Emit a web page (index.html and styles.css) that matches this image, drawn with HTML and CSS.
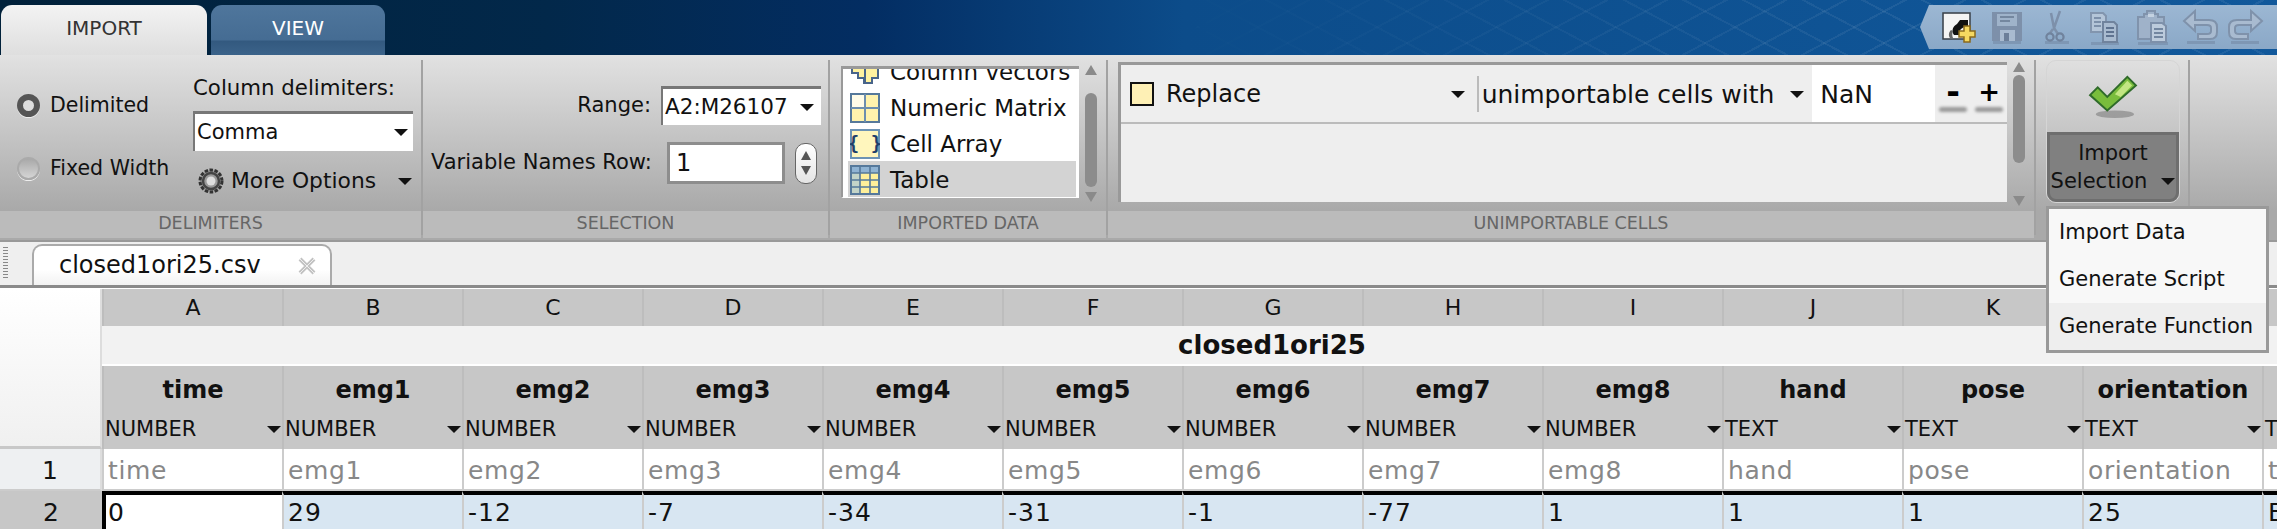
FILE: index.html
```html
<!doctype html>
<html lang="en">

<head>
  <meta charset="UTF-8">
  <title>Import - closed1ori25.csv</title>
  <link rel="stylesheet" href="styles.css">
</head>

<body>
  <header class="topbar">
    <div class="tab tab-active">IMPORT</div>
    <div class="tab tab-view">VIEW</div>
    <div class="quick">
      <svg class="qa" viewBox="0 0 48 44">
        <rect x="8" y="8" width="27" height="26" fill="#dfe3e6" stroke="#3a4048" stroke-width="1.5" />
        <path d="M9 9h25v24H9z" fill="#f4f4f4" />
        <path d="M19 30c-3-4-1-9 3-11l3-4h8v15h-4v-8l-3 2c-2 2-2 4-1 6z" fill="#111" />
        <path d="M15 33c-2-3-1-6 1-8l2 1c-1 2-1 5 0 7z" fill="#666" />
        <path d="M24 26h5v-5h6v5h5v6h-5v5h-6v-5h-5z" fill="#f5d860" stroke="#8a6a1c" stroke-width="1.5" />
      </svg>
      <svg class="qa" viewBox="0 0 48 44">
        <rect x="10" y="36" width="28" height="3" fill="#6f84a0" opacity=".5" />
        <path d="M9 7h30v29H9z" fill="#7d90aa" />
        <path d="M14 9h20v12H14z" fill="#9fb3ca" />
        <path d="M17 12h14M17 16h10" stroke="#74879f" stroke-width="2" />
        <path d="M17 25h15v11H17z" fill="#a9bbd0" />
        <path d="M21 28h5v8h-5z" fill="#6c7f99" />
      </svg>
      <svg class="qa" viewBox="0 0 48 44">
        <rect x="14" y="36" width="24" height="3" fill="#6f84a0" opacity=".5" />
        <path d="M29 6l-6 17M20 8l3 15 4 6M22 24l-3 4" stroke="#7d90aa" stroke-width="2.5" fill="none" />
        <circle cx="19" cy="32" r="3.6" fill="none" stroke="#70839d" stroke-width="2.2" />
        <circle cx="29" cy="32" r="3.6" fill="none" stroke="#70839d" stroke-width="2.2" />
      </svg>
      <svg class="qa" viewBox="0 0 48 44">
        <rect x="12" y="37" width="28" height="3" fill="#6f84a0" opacity=".5" />
        <path d="M12 8h12l3 3v16H12z" fill="#b4c5d8" stroke="#8295ae" stroke-width="2" />
        <path d="M15 13h7M15 17h7M15 21h7" stroke="#7d90aa" stroke-width="2" />
        <path d="M24 17h11l3 3v17H24z" fill="#a9bbd0" stroke="#70839d" stroke-width="2" />
        <path d="M27 23h8M27 27h8M27 31h8" stroke="#5f7390" stroke-width="2" />
      </svg>
      <svg class="qa" viewBox="0 0 48 44">
        <rect x="11" y="37" width="30" height="3" fill="#6f84a0" opacity=".5" />
        <path d="M11 12h6v-3h3V6h8v3h3v3h6v22H11z" fill="#9fb2c9" stroke="#8093ac" stroke-width="2" />
        <path d="M21 9h6v3h-6z" fill="#c4d2e1" />
        <path d="M24 18h11l4 3v16H24z" fill="#bccbdc" stroke="#7d90aa" stroke-width="2" />
        <path d="M27 24h9M27 28h9M27 32h9" stroke="#7286a0" stroke-width="2" />
      </svg>
      <svg class="qa" viewBox="0 0 48 44">
        <rect x="12" y="36" width="28" height="3" fill="#6f84a0" opacity=".5" />
        <path d="M20 6L9 16l11 10v-6h12c3 0 4 1 4 3v3c0 2-1 3-4 3H23v5h12c5 0 7-3 7-7v-5c0-5-3-7-8-7H20z" fill="#a9bbd0" stroke="#7f92ab" stroke-width="2" />
      </svg>
      <svg class="qa" viewBox="0 0 48 44">
        <rect x="8" y="36" width="28" height="3" fill="#6f84a0" opacity=".5" />
        <path d="M28 6l11 10-11 10v-6H16c-3 0-4 1-4 3v3c0 2 1 3 4 3h9v5H13c-5 0-7-3-7-7v-5c0-5 3-7 8-7h14z" fill="#a9bbd0" stroke="#7f92ab" stroke-width="2" />
      </svg>
    </div>
  </header>

  <section class="ribbon">
    <div class="group group-delim">
      <div class="group-body">
        <div class="radios">
          <label class="radio"><i class="dot dot-on"></i>Delimited</label>
          <label class="radio"><i class="dot"></i>Fixed Width</label>
        </div>
        <div class="delims">
          <div class="delims-title">Column delimiters:</div>
          <div class="combo combo-comma">Comma<i class="arrow"></i></div>
          <div class="more">
            <svg class="gear" viewBox="0 0 28 28">
              <circle cx="14" cy="14" r="11" fill="#9a9a9a" stroke="#333" stroke-width="3" stroke-dasharray="3.5 1.5" />
              <circle cx="14" cy="14" r="8" fill="none" stroke="#444" stroke-width="2.5" />
              <circle cx="14" cy="14" r="4.5" fill="#dedede" />
            </svg>
            More Options<i class="arrow"></i>
          </div>
        </div>
      </div>
      <div class="group-label">DELIMITERS</div>
    </div>

    <div class="group group-sel">
      <div class="group-body sel-grid">
        <span class="sel-label">Range:</span>
        <div class="combo combo-range">A2:M26107<i class="arrow"></i></div>
        <span class="sel-label">Variable Names Row:</span>
        <div class="spin-row">
          <div class="spin-input">1</div>
          <div class="spinner"><i class="tri tri-up"></i><i class="tri tri-down"></i></div>
        </div>
      </div>
      <div class="group-label">SELECTION</div>
    </div>

    <div class="group group-data">
      <div class="group-body data-body">
        <ul class="types">
          <li class="type type-clipped">
            <svg class="type-icon" viewBox="0 0 30 30">
              <path d="M2 16h6v5h6v5h8v-5h6V2H2z" fill="#fff2a0" stroke="#49658a" stroke-width="2" />
              <path d="M15 2v24" stroke="#49658a" stroke-width="2" />
            </svg>
            Column vectors
          </li>
          <li class="type">
            <svg class="type-icon" viewBox="0 0 30 30">
              <rect x="1" y="1" width="28" height="28" fill="#fff3ad" stroke="#56799b" stroke-width="2" />
              <path d="M2 2h13v13H2z" fill="#fffce8" />
              <path d="M15 1v28M1 15h28" stroke="#6d8fae" stroke-width="2" />
            </svg>
            Numeric Matrix
          </li>
          <li class="type">
            <svg class="type-icon" viewBox="0 0 30 30">
              <rect x="1" y="1" width="28" height="28" fill="#fff6bd" stroke="#6d93b4" stroke-width="2" />
              <text class="braces" x="15" y="21" text-anchor="middle">{ }</text>
            </svg>
            Cell Array
          </li>
          <li class="type type-on">
            <svg class="type-icon" viewBox="0 0 30 30">
              <rect x="1" y="1" width="28" height="28" fill="#fff09a" stroke="#56799b" stroke-width="2" />
              <path d="M2 2h26v6H2z" fill="#8fb3d3" />
              <path d="M2 8h8v20H2z" fill="#c3d4c8" />
              <path d="M10 1v28M20 1v28M1 8h28M1 15h28M1 22h28" stroke="#56799b" stroke-width="1.6" />
            </svg>
            Table
          </li>
        </ul>
        <div class="vscroll vscroll-data"><i class="tri tri-up"></i><i class="thumb"></i><i class="tri tri-down"></i></div>
      </div>
      <div class="group-label">IMPORTED DATA</div>
    </div>

    <div class="group group-unimp">
      <div class="group-body unimp-body">
        <div class="rules">
          <div class="rule">
            <i class="swatch"></i>
            <span class="rule-action">Replace<i class="arrow"></i></span>
            <span class="rule-sep"></span>
            <span class="rule-what">unimportable cells with<i class="arrow"></i></span>
            <span class="rule-value">NaN</span>
            <span class="rule-btn rule-minus">-</span>
            <span class="rule-btn">+</span>
          </div>
        </div>
        <div class="vscroll vscroll-rules"><i class="tri tri-up"></i><i class="thumb"></i><i class="tri tri-down"></i></div>
      </div>
      <div class="group-label">UNIMPORTABLE CELLS</div>
    </div>

    <div class="group group-import">
      <div class="group-body import-body">
        <div class="import-btn">
          <div class="import-top">
            <svg class="check" viewBox="0 0 52 46">
              <ellipse cx="28" cy="41" rx="20" ry="4" fill="#777" opacity=".55" />
              <path d="M2 21l8-8 10 10L41 2l9 9-30 26z" fill="#79bd3c" stroke="#2f6b2a" stroke-width="2" />
              <path d="M28 20L41 6l5 5-12 12z" fill="#c3e683" />
            </svg>
          </div>
          <div class="import-split">Import<br>Selection<i class="arrow"></i></div>
        </div>
      </div>
    </div>
    <div class="ribbon-rest"></div>
  </section>

  <nav class="docbar">
    <i class="grip"></i>
    <div class="doctab">
      closed1ori25.csv
      <svg class="close" viewBox="0 0 18 18">
        <path d="M2 2l14 14M16 2L2 16" stroke="#c2c2c2" stroke-width="4" />
        <path d="M2 2l14 14M16 2L2 16" stroke="#eee" stroke-width="1" />
      </svg>
    </div>
  </nav>

  <main class="sheet">
    <div class="corner"></div>
    <div class="col">A</div><div class="col">B</div><div class="col">C</div><div class="col">D</div><div class="col">E</div><div class="col">F</div><div class="col">G</div><div class="col">H</div><div class="col">I</div><div class="col">J</div><div class="col">K</div><div class="col">L</div><div class="col">M</div>

    <div class="title">closed1ori25</div>

    <div class="name"><b>time</b><span>NUMBER<i class="arrow"></i></span></div>
    <div class="name"><b>emg1</b><span>NUMBER<i class="arrow"></i></span></div>
    <div class="name"><b>emg2</b><span>NUMBER<i class="arrow"></i></span></div>
    <div class="name"><b>emg3</b><span>NUMBER<i class="arrow"></i></span></div>
    <div class="name"><b>emg4</b><span>NUMBER<i class="arrow"></i></span></div>
    <div class="name"><b>emg5</b><span>NUMBER<i class="arrow"></i></span></div>
    <div class="name"><b>emg6</b><span>NUMBER<i class="arrow"></i></span></div>
    <div class="name"><b>emg7</b><span>NUMBER<i class="arrow"></i></span></div>
    <div class="name"><b>emg8</b><span>NUMBER<i class="arrow"></i></span></div>
    <div class="name"><b>hand</b><span>TEXT<i class="arrow"></i></span></div>
    <div class="name"><b>pose</b><span>TEXT<i class="arrow"></i></span></div>
    <div class="name"><b>orientation</b><span>TEXT<i class="arrow"></i></span></div>
    <div class="name"><b>&nbsp;</b><span>TEXT<i class="arrow"></i></span></div>

    <div class="rowhead">1</div>
    <div class="cell cell-raw">time</div><div class="cell cell-raw">emg1</div><div class="cell cell-raw">emg2</div><div class="cell cell-raw">emg3</div><div class="cell cell-raw">emg4</div><div class="cell cell-raw">emg5</div><div class="cell cell-raw">emg6</div><div class="cell cell-raw">emg7</div><div class="cell cell-raw">emg8</div><div class="cell cell-raw">hand</div><div class="cell cell-raw">pose</div><div class="cell cell-raw">orientation</div><div class="cell cell-raw">t</div>

    <div class="rowhead rowhead-on">2</div>
    <div class="cell cell-sel cell-first">0</div><div class="cell cell-sel">29</div><div class="cell cell-sel">-12</div><div class="cell cell-sel">-7</div><div class="cell cell-sel">-34</div><div class="cell cell-sel">-31</div><div class="cell cell-sel">-1</div><div class="cell cell-sel">-77</div><div class="cell cell-sel">1</div><div class="cell cell-sel">1</div><div class="cell cell-sel">1</div><div class="cell cell-sel">25</div><div class="cell cell-sel">E</div>
  </main>

  <div class="menu">
    <div class="menu-item">Import Data</div>
    <div class="menu-item">Generate Script</div>
    <div class="menu-item menu-item-on">Generate Function</div>
  </div>
</body>

</html>
```

FILE: styles.css
```css
html,
body {
  margin: 0;
  height: 529px;
  overflow: hidden;
}

body {
  position: relative;
  width: 2277px;
  font: 400 21px/1.2 "DejaVu Sans", sans-serif;
  color: #111;
  background: #fff;
}

i {
  font-style: normal;
}

.arrow {
  display: inline-block;
  width: 0;
  height: 0;
  border-left: 7px solid transparent;
  border-right: 7px solid transparent;
  border-top: 7px solid #111;
}

.tri {
  display: block;
  width: 0;
  height: 0;
  border-left: 6px solid transparent;
  border-right: 6px solid transparent;
}

.tri-up {
  border-bottom: 10px solid #8a8a8a;
}

.tri-down {
  border-top: 10px solid #8a8a8a;
}

/* top bar */
.topbar {
  position: relative;
  display: flex;
  align-items: flex-end;
  height: 55px;
  padding-left: 1px;
  box-sizing: border-box;
  background: linear-gradient(90deg, #01213a 0, #02284a 24%, #032d62 38%, #0c4c8a 52%, #11589b 100%);
  overflow: hidden;
}

.topbar::before {
  content: "";
  position: absolute;
  inset: 0;
  background:
    repeating-linear-gradient(28deg, transparent 0 26px, rgba(255, 255, 255, .07) 26px 28px),
    repeating-linear-gradient(-28deg, transparent 0 26px, rgba(255, 255, 255, .07) 26px 28px);
  -webkit-mask-image: linear-gradient(90deg, transparent 50%, #000 85%);
  mask-image: linear-gradient(90deg, transparent 50%, #000 85%);
}

.tab {
  position: relative;
  height: 50px;
  box-sizing: border-box;
  padding-top: 11px;
  border-radius: 11px 11px 0 0;
  text-align: center;
  font-size: 20px;
}

.tab-active {
  width: 206px;
  color: #333;
  background: linear-gradient(#f3f3f3, #dedede);
}

.tab-view {
  width: 174px;
  margin-left: 4px;
  color: #fff;
  background: linear-gradient(#4f769c 0, #456c93 70%, #33597f 72%, #3b638a 100%);
}

.quick {
  position: relative;
  display: flex;
  align-self: flex-start;
  box-sizing: border-box;
  width: 357px;
  height: 44px;
  margin: 5px 0 0 auto;
  padding-left: 15px;
  background: linear-gradient(#9cb7d3, #8aa8c7);
  clip-path: polygon(0 50%, 9px 0, 100% 0, 100% 100%, 9px 100%);
}

.qa {
  flex: none;
  width: 48px;
  height: 44px;
}

/* ribbon */
.ribbon {
  display: flex;
  height: 185px;
  border-bottom: 2px solid #999;
  background: linear-gradient(#e2e2e2 0, #dedede 5%, #a9a9a9 84%, #a9a9a9 100%);
}

.group {
  display: flex;
  flex-direction: column;
  box-sizing: border-box;
  background: linear-gradient(#a2a2a2, #a2a2a2) right 5px / 2px 175px no-repeat;
}

.group-body {
  height: 156px;
  box-sizing: border-box;
}

.group-label {
  height: 27px;
  margin-right: 2px;
  text-align: center;
  font-size: 17.5px;
  line-height: 25px;
  color: #666;
  background: #bbb;
}

.group-delim {
  width: 423px;
}

.group-delim .group-body {
  display: flex;
}

.radios {
  display: flex;
  flex-direction: column;
  gap: 31px;
  width: 193px;
  box-sizing: border-box;
  padding: 34px 0 0 17px;
}

.radio {
  display: flex;
  align-items: center;
  gap: 10px;
  height: 32px;
  font-size: 20.5px;
}

.dot {
  width: 23px;
  height: 23px;
  box-sizing: border-box;
  border-radius: 50%;
  border: 2px solid #aaa;
  background: linear-gradient(#a9a9a9, #d5d5d5);
  box-shadow: 0 1px 0 #eee;
}

.dot-on {
  border: 6px solid #555;
  background: #ddd;
}

.delims {
  width: 220px;
  padding-top: 20px;
}

.delims-title {
  height: 26px;
  line-height: 26px;
  font-size: 21.3px;
  white-space: nowrap;
}

.combo {
  display: flex;
  align-items: center;
  justify-content: space-between;
  box-sizing: border-box;
  background: #fff;
  border-top: 3px solid #777;
  border-left: 2px solid #777;
  font-size: 21px;
}

.combo-comma {
  height: 40px;
  margin-top: 10px;
  padding: 0 5px 0 2px;
}

.more {
  display: flex;
  align-items: center;
  height: 34px;
  margin-top: 13px;
  padding-left: 4px;
  font-size: 21.8px;
  white-space: nowrap;
}

.gear {
  width: 28px;
  height: 28px;
  margin-right: 6px;
}

.more .arrow {
  margin-left: 22px;
}

.group-sel {
  width: 407px;
}

.sel-grid {
  display: grid;
  grid-template-columns: 220px 160px;
  grid-template-rows: 39px 42px;
  column-gap: 10px;
  row-gap: 17px;
  align-items: center;
  padding: 31px 0 0 8px;
}

.sel-label {
  text-align: right;
  white-space: nowrap;
  font-size: 21px;
}

.combo-range {
  height: 39px;
  padding: 0 7px 0 2px;
  font-size: 21.5px;
}

.spin-row {
  display: flex;
  align-items: center;
  margin-left: 6px;
}

.spin-input {
  width: 118px;
  height: 42px;
  box-sizing: border-box;
  padding-left: 6px;
  border: 3px solid #8d8d8d;
  font-size: 24px;
  line-height: 36px;
  background: #fff;
}

.spinner {
  display: flex;
  flex-direction: column;
  justify-content: center;
  align-items: center;
  gap: 6px;
  width: 22px;
  height: 41px;
  margin-left: 10px;
  box-sizing: border-box;
  border: 1px solid #666;
  border-radius: 10px;
  background: linear-gradient(#fff, #e4e4e4);
}

.spinner .tri {
  border-left-width: 5px;
  border-right-width: 5px;
}

.spinner .tri-up {
  border-bottom: 9px solid #555;
}

.spinner .tri-down {
  border-top: 9px solid #555;
}

.group-data {
  width: 278px;
}

.data-body {
  display: flex;
  padding: 11px 0 0 11px;
}

.types {
  width: 238px;
  height: 132px;
  box-sizing: border-box;
  margin: 0;
  padding: 0 3px 0 5px;
  list-style: none;
  overflow: hidden;
  background: #fff;
  border-top: 3px solid #999;
  border-left: 2px solid #999;
  border-bottom: 1px solid #fff;
}

.type {
  display: flex;
  align-items: center;
  gap: 10px;
  height: 36px;
  box-sizing: border-box;
  padding: 3px 0 0 2px;
  font-size: 23px;
  white-space: nowrap;
}

.type-clipped {
  margin-top: -16px;
}

.type-on {
  background: #d3d3d3;
}

.type-icon {
  flex: none;
  width: 30px;
  height: 30px;
  margin-top: -2px;
}

.braces {
  font: 700 19px "DejaVu Sans Mono", monospace;
  fill: #1f3f6b;
}

.vscroll {
  display: flex;
  flex-direction: column;
  align-items: center;
}

.vscroll-data {
  width: 14px;
  margin: -1px 0 0 5px;
}

.vscroll-data .thumb {
  height: 94px;
  margin: 18px 0 5px;
}

.thumb {
  display: block;
  width: 12px;
  border-radius: 6px;
  background: #8c8c8c;
}

.group-unimp {
  width: 928px;
}

.unimp-body {
  display: flex;
  padding: 7px 0 0 10px;
}

.rules {
  width: 889px;
  height: 140px;
  box-sizing: border-box;
  border-top: 3px solid #999;
  border-left: 3px solid #999;
  background: #eee;
}

.rule {
  display: flex;
  align-items: center;
  height: 57px;
  border-bottom: 2px solid #bbb;
  font-size: 24px;
}

.swatch {
  flex: none;
  width: 24px;
  height: 24px;
  margin-left: 9px;
  box-sizing: border-box;
  border: 2px solid #111;
  background: #fef0b5;
}

.rule-action {
  display: flex;
  align-items: center;
  justify-content: space-between;
  width: 299px;
  margin-left: 12px;
  padding-top: 2px;
}

.rule-sep {
  width: 2px;
  height: 36px;
  margin-left: 12px;
  background: #bbb;
}

.rule-what {
  display: flex;
  align-items: center;
  justify-content: space-between;
  width: 323px;
  padding: 2px 0 0 3px;
  font-size: 25px;
  white-space: nowrap;
}

.rule-value {
  width: 123px;
  height: 57px;
  margin-left: 8px;
  box-sizing: border-box;
  padding-left: 8px;
  background: #fff;
  font-size: 25px;
  line-height: 59px;
}

.rule-btn {
  position: relative;
  width: 36px;
  height: 40px;
  text-align: center;
  font: 700 26px/36px "DejaVu Sans", sans-serif;
  color: #000;
}

.rule-minus {
  font-size: 33px;
}

.rule-btn::after {
  content: "";
  position: absolute;
  left: 4px;
  right: 4px;
  top: 33px;
  height: 5px;
  border-radius: 3px;
  background: #999;
  filter: blur(1.5px);
}

.vscroll-rules {
  width: 14px;
  margin-left: 5px;
}

.vscroll-rules .thumb {
  height: 88px;
  margin: 3px 0 33px;
}

.group-import {
  width: 154px;
}

.import-body {
  padding: 5px 0 0 10px;
}

.import-btn {
  width: 134px;
  height: 143px;
  box-sizing: border-box;
  border: 1px solid #d5d5d5;
  border-radius: 10px;
}

.import-top {
  display: flex;
  justify-content: center;
  align-items: flex-start;
  height: 71px;
  padding-top: 14px;
  box-sizing: border-box;
}

.check {
  width: 50px;
  height: 44px;
}

.import-split {
  position: relative;
  height: 70px;
  box-sizing: border-box;
  padding-top: 4px;
  border: 3px solid #6e6e6e;
  border-radius: 0 0 9px 9px;
  background: #808080;
  text-align: center;
  font-size: 21px;
  line-height: 28px;
}

.import-split .arrow {
  margin: 0 0 3px 14px;
}

.ribbon-rest {
  flex: 1;
}

/* open file tabs */
.docbar {
  display: flex;
  align-items: flex-end;
  height: 46px;
  box-sizing: border-box;
  padding-top: 2px;
  background: #efefef;
  border-bottom: 3px solid #8a8a8a;
}

.grip {
  width: 5px;
  height: 32px;
  margin: 0 24px 6px 3px;
  background: repeating-linear-gradient(#888 0 1px, transparent 1px 3px);
}

.doctab {
  display: flex;
  align-items: center;
  width: 300px;
  height: 41px;
  box-sizing: border-box;
  padding-left: 25px;
  border: 2px solid #aaa;
  border-bottom: 0;
  border-radius: 10px 10px 0 0;
  background: linear-gradient(#fff 60%, #f2f2f2);
  font-size: 24px;
  white-space: nowrap;
}

.close {
  width: 18px;
  height: 18px;
  margin-left: 37px;
}

/* spreadsheet */
.sheet {
  display: grid;
  grid-template-columns: 102px repeat(13, 180px);
  grid-template-rows: 37px 40px 83px 42px 38px;
  margin-top: 1px;
}

.corner {
  grid-row: 1 / 4;
  box-sizing: border-box;
  border-right: 2px solid #ddd;
  border-bottom: 3px solid #c8c8c8;
  background: linear-gradient(#fff, #f0f0f0);
}

.col {
  box-sizing: border-box;
  border-left: 2px solid #bdbdbd;
  background: #c7c7c7;
  text-align: center;
  font-size: 22px;
  line-height: 37px;
}

.title {
  grid-column: 2 / -1;
  box-sizing: border-box;
  height: 38px;
  background: #f2f2f2;
  text-align: center;
  font-weight: 700;
  font-size: 26px;
  line-height: 38px;
}

.name {
  display: flex;
  flex-direction: column;
  box-sizing: border-box;
  border-left: 2px solid #bdbdbd;
  background: #c7c7c7;
}

.name b {
  height: 48px;
  text-align: center;
  font-size: 24px;
  line-height: 48px;
}

.name span {
  display: flex;
  align-items: center;
  justify-content: space-between;
  padding: 0 1px;
  font-size: 21px;
  line-height: 30px;
}

.rowhead {
  box-sizing: border-box;
  border-right: 2px solid #ddd;
  border-bottom: 2px solid #ccc;
  background: #eef0f2;
  text-align: center;
  font-size: 25px;
  line-height: 43px;
}

.rowhead-on {
  border: 0;
  background: #c7c7c7;
}

.cell {
  box-sizing: border-box;
  padding-left: 4px;
  border-left: 2px solid #ccc;
  font-size: 25px;
  white-space: nowrap;
}

.cell-raw {
  color: #888;
  line-height: 43px;
  border-bottom: 2px solid #ccc;
  letter-spacing: .6px;
}

.cell-sel {
  padding-top: 1px;
  border-top: 4px solid #000;
  background: #d8e6f2;
  line-height: 33px;
  letter-spacing: 1px;
}

.cell-first {
  padding-left: 2px;
  border-left: 4px solid #000;
  background: #fff;
}

/* popup menu */
.menu {
  position: absolute;
  left: 2046px;
  top: 206px;
  width: 223px;
  box-sizing: border-box;
  border: 3px solid #999;
  background: #f8f8f8;
  font-size: 21px;
}

.menu-item {
  height: 47px;
  padding-left: 10px;
  line-height: 46px;
}

.menu-item-on {
  background: #eee;
}
```
